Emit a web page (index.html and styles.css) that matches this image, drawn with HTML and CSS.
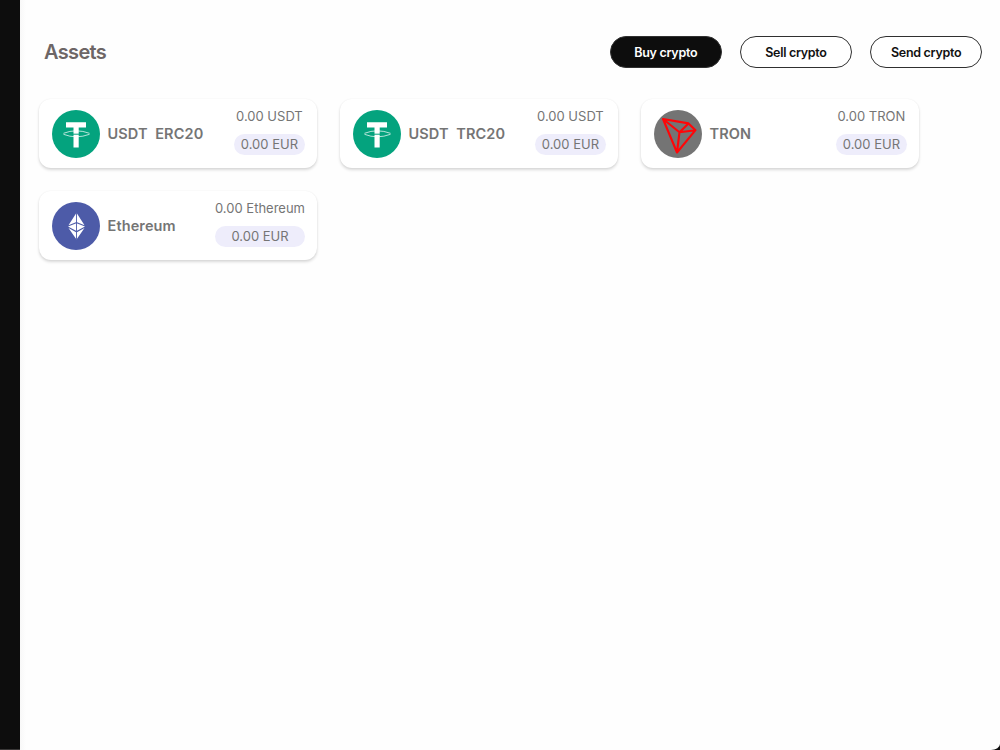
FILE: index.html
```html
<!DOCTYPE html>
<html lang="en">
<head>
    <meta charset="UTF-8">
    <meta name="viewport" content="width=device-width, initial-scale=1.0">
    <title>Assets</title>
    <link rel="stylesheet" href="styles.css">
</head>
<body>
    <div class="sidebar"></div>
    <main class="content">
        <header class="header">
            <h1>Assets</h1>
            <div class="button-group">
                <button class="button primary">Buy crypto</button>
                <button class="button">Sell crypto</button>
                <button class="button">Send crypto</button>
            </div>
        </header>

        <div class="assets">
            <div class="card">
                <svg class="icon" viewBox="0 0 48 48">
                    <circle cx="24" cy="24" r="24" fill="#04a37e"/>
                    <path d="M14 12.3h20v5.3h-7.3v19.8h-5.2V17.6H14z" fill="#fff"/>
                    <path d="M11.5 23.3q12.5-5 26 0M11.5 24.3q12.5 5 26 0" fill="none" stroke="#fff" stroke-width="1" opacity="0.7"/>
                    <path d="M20 24.2h8" stroke="#04a37e" stroke-width="1"/>
                </svg>
                <span class="name">USDT&nbsp; ERC20</span>
                <div class="balance">
                    <span class="amount">0.00 USDT</span>
                    <span class="fiat">0.00 EUR</span>
                </div>
            </div>

            <div class="card">
                <svg class="icon" viewBox="0 0 48 48">
                    <circle cx="24" cy="24" r="24" fill="#04a37e"/>
                    <path d="M14 12.3h20v5.3h-7.3v19.8h-5.2V17.6H14z" fill="#fff"/>
                    <path d="M11.5 23.3q12.5-5 26 0M11.5 24.3q12.5 5 26 0" fill="none" stroke="#fff" stroke-width="1" opacity="0.7"/>
                    <path d="M20 24.2h8" stroke="#04a37e" stroke-width="1"/>
                </svg>
                <span class="name">USDT&nbsp; TRC20</span>
                <div class="balance">
                    <span class="amount">0.00 USDT</span>
                    <span class="fiat">0.00 EUR</span>
                </div>
            </div>

            <div class="card">
                <svg class="icon" viewBox="0 0 48 48">
                    <circle cx="24" cy="24" r="24" fill="#747474"/>
                    <path d="M9 9L34.5 13.4L41.5 20.2L23 42.5ZM9 9L25.5 22.2L34.5 13.4M25.5 22.2L41.5 20.2M25.5 22.2L23 42.5" fill="none" stroke="#ff0508" stroke-width="2.1" stroke-linejoin="round"/>
                </svg>
                <span class="name">TRON</span>
                <div class="balance">
                    <span class="amount">0.00 TRON</span>
                    <span class="fiat">0.00 EUR</span>
                </div>
            </div>

            <div class="card">
                <svg class="icon" viewBox="0 0 48 48">
                    <circle cx="24" cy="24" r="24" fill="#4d5ba8"/>
                    <path d="M24.5 10.7L32.5 23.2L24.5 19.9L16.5 23.2ZM24.5 21.2L33 24.4L24.5 28.9L16 24.4ZM16.5 26L24.5 30.4L32.5 26L24.5 37.5Z" fill="#fff"/>
                    <path d="M24.5 10.7v26.8" stroke="#4d5ba8" stroke-width="0.9"/>
                </svg>
                <span class="name">Ethereum</span>
                <div class="balance">
                    <span class="amount">0.00 Ethereum</span>
                    <span class="fiat">0.00 EUR</span>
                </div>
            </div>
        </div>
    </main>
</body>
</html>
```
FILE: styles.css
```css
* {
    box-sizing: border-box;
}

body {
    margin: 0;
    height: 100vh;
    display: flex;
    overflow: hidden;
    background-color: #0d0d0d;
    font-family: Inter, 'Open Sans', sans-serif;
    color: #757575;
}

.sidebar {
    width: 20px;
    border-bottom: 1px solid #3a3838;
}

.content {
    flex: 1;
    padding: 36px 18px 0 19px;
    background: linear-gradient(to right, #f8f8f8, #fefefe 6px);
    border-bottom-right-radius: 9px 6px;
}

.header {
    display: flex;
    justify-content: space-between;
    align-items: center;
    height: 32px;
    padding-left: 5px;
}

h1 {
    margin: 0;
    font-size: 20px;
    font-weight: 600;
    letter-spacing: -0.65px;
    color: #6d6666;
}

.button-group {
    display: flex;
    gap: 18.5px;
}

.button {
    width: 111.7px;
    height: 32px;
    padding: 0;
    border: 1px solid #303030;
    border-radius: 16px;
    background-color: white;
    color: #111;
    font-family: inherit;
    font-size: 12.5px;
    font-weight: 600;
    letter-spacing: -0.3px;
}

.primary {
    background-color: #0d0d0d;
    color: white;
}

.assets {
    display: grid;
    grid-template-columns: repeat(3, 278px);
    grid-auto-rows: 69px;
    gap: 23px;
    margin-top: 31px;
}

.card {
    display: flex;
    align-items: center;
    padding: 0 12px 0 13px;
    border-radius: 12px;
    background-color: white;
    box-shadow: 0 2px 3px rgba(0, 0, 0, 0.15), 0 0 2px rgba(0, 0, 0, 0.06);
}

.icon {
    width: 48px;
    height: 48px;
    margin-right: 7.5px;
}

.name {
    font-size: 14.5px;
    font-weight: 600;
    letter-spacing: 0.12px;
}

.balance {
    display: flex;
    flex-direction: column;
    gap: 7px;
    margin-left: auto;
    padding-bottom: 7px;
    text-align: center;
    font-size: 13px;
    line-height: 21px;
}

.fiat {
    padding: 0 7px;
    border-radius: 11px;
    background-color: #eeedfb;
}
```
